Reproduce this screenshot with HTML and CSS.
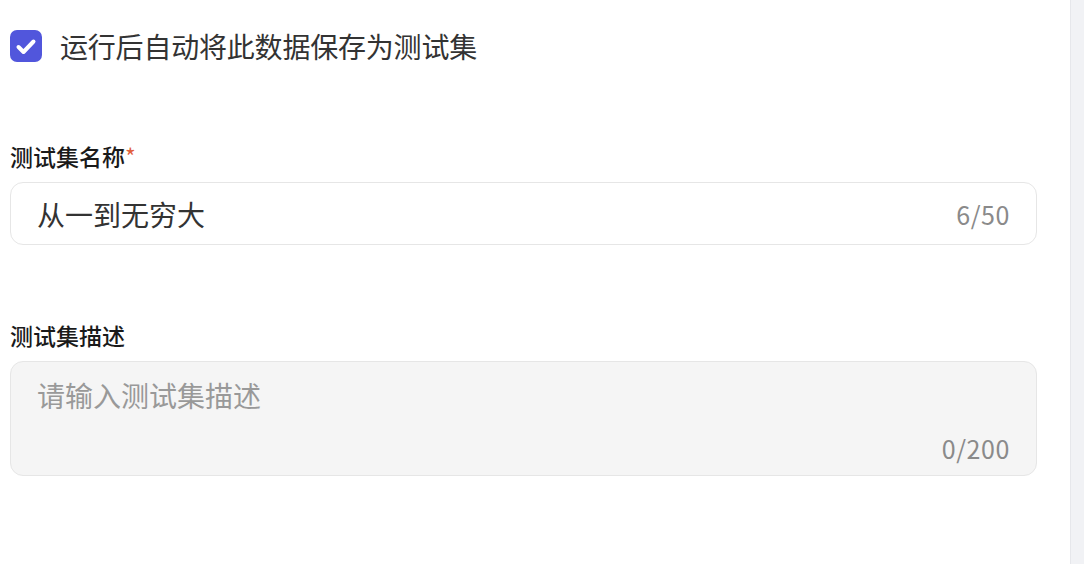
FILE: index.html
```html
<!DOCTYPE html>
<html lang="zh-CN">
<head>
<meta charset="utf-8">
<title>测试集</title>
<link rel="stylesheet" href="styles.css">
</head>
<body>
<div class="page">
  <main class="main">
    <label class="check-row">
      <span class="checkbox">
        <svg viewBox="0 0 32 32" width="32" height="32"><path d="M8.5 17 L13.5 22 L23.5 11.5" fill="none" stroke="#fff" stroke-width="4" stroke-linecap="round" stroke-linejoin="round"/></svg>
      </span>
      <span class="check-text">运行后自动将此数据保存为测试集</span>
    </label>

    <div class="field field-name">
      <div class="field-label">测试集名称<span class="req">*</span></div>
      <div class="input-box">
        <input class="input" type="text" value="从一到无穷大">
        <span class="count">6/50</span>
      </div>
    </div>

    <div class="field field-desc">
      <div class="field-label">测试集描述</div>
      <div class="textarea-box">
        <textarea class="textarea" placeholder="请输入测试集描述"></textarea>
        <span class="count count-area">0/200</span>
      </div>
    </div>
  </main>
  <aside class="side"></aside>
</div>
</body>
</html>
```
FILE: styles.css
```css
* { box-sizing: border-box; }
html, body {
  margin: 0;
  padding: 0;
  background: #fff;
  font-family: "Noto Sans CJK SC", "Noto Sans", sans-serif;
  color: #333;
}
.page {
  display: flex;
  width: 1084px;
  height: 564px;
  overflow: hidden;
}
.main {
  flex: 1;
  padding: 30px 33px 0 10px;
}
.side {
  width: 14px;
  background: #f1f2f5;
  border-left: 1px solid #e6e7eb;
}
.check-row {
  display: flex;
  align-items: center;
  gap: 18px;
  height: 32px;
}
.checkbox {
  width: 32px;
  height: 32px;
  border-radius: 7px;
  background: #5156dc;
  display: flex;
}
.check-text {
  font-size: 28px;
  line-height: 32px;
  color: #333;
  letter-spacing: -0.2px;
}
.field-name { margin-top: 78px; }
.field-desc { margin-top: 74px; }
.field-label {
  font-size: 23px;
  line-height: 32px;
  font-weight: 500;
  color: #1a1a1a;
  margin-bottom: 10px;
}
.req {
  color: #e2603c;
  font-weight: 400;
}
.input-box {
  display: flex;
  align-items: center;
  height: 63px;
  border: 1px solid #e6e6e6;
  border-radius: 13px;
  padding: 0 26px 0 26px;
  background: #fff;
}
.input {
  flex: 1;
  border: none;
  outline: none;
  background: transparent;
  font-family: inherit;
  font-size: 28px;
  color: #333;
  padding: 0;
}
.count {
  font-size: 25px;
  letter-spacing: 0.6px;
  color: #8a8a8a;
  line-height: 32px;
}
.textarea-box {
  display: flex;
  flex-direction: column;
  height: 115px;
  border: 1px solid #e6e6e6;
  border-radius: 13px;
  background: #f5f5f5;
  padding: 13px 26px 11px 26px;
}
.textarea {
  flex: 1;
  border: none;
  outline: none;
  resize: none;
  background: transparent;
  font-family: inherit;
  font-size: 28px;
  line-height: 40px;
  color: #333;
  padding: 0;
  overflow: hidden;
}
.textarea::placeholder { color: #999; }
.count-area { align-self: flex-end; }
```
